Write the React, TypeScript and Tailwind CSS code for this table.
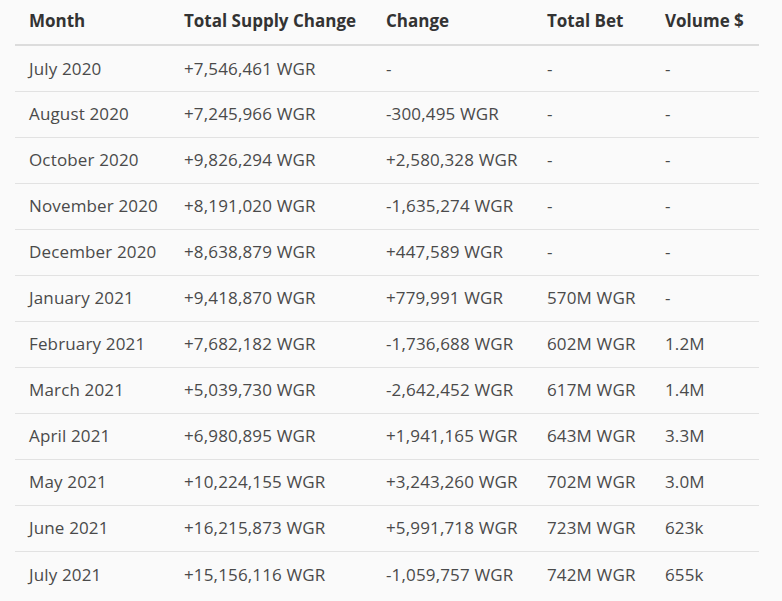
const rows: [string, string, string, string, string][] = [
  ['July 2020', '+7,546,461 WGR', '-', '-', '-'],
  ['August 2020', '+7,245,966 WGR', '-300,495 WGR', '-', '-'],
  ['October 2020', '+9,826,294 WGR', '+2,580,328 WGR', '-', '-'],
  ['November 2020', '+8,191,020 WGR', '-1,635,274 WGR', '-', '-'],
  ['December 2020', '+8,638,879 WGR', '+447,589 WGR', '-', '-'],
  ['January 2021', '+9,418,870 WGR', '+779,991 WGR', '570M WGR', '-'],
  ['February 2021', '+7,682,182 WGR', '-1,736,688 WGR', '602M WGR', '1.2M'],
  ['March 2021', '+5,039,730 WGR', '-2,642,452 WGR', '617M WGR', '1.4M'],
  ['April 2021', '+6,980,895 WGR', '+1,941,165 WGR', '643M WGR', '3.3M'],
  ['May 2021', '+10,224,155 WGR', '+3,243,260 WGR', '702M WGR', '3.0M'],
  ['June 2021', '+16,215,873 WGR', '+5,991,718 WGR', '723M WGR', '623k'],
  ['July 2021', '+15,156,116 WGR', '-1,059,757 WGR', '742M WGR', '655k'],
];

const headers = ['Month', 'Total Supply Change', 'Change', 'Total Bet', 'Volume $'];

export default function App() {
  return (
    <div
      className="min-h-[601px] w-full bg-[#fafafa] px-[15px] pb-4"
      style={{ fontFamily: '"Open Sans", "Noto Sans", sans-serif' }}
    >
      <table className="w-[744px] table-fixed border-collapse text-left text-[17px]">
        <colgroup>
          <col className="w-[155px]" />
          <col className="w-[202px]" />
          <col className="w-[161px]" />
          <col className="w-[118px]" />
          <col className="w-[108px]" />
        </colgroup>
        <thead>
          <tr className="h-[45px] border-b-2 border-[#dcdcdc]">
            {headers.map((h) => (
              <th key={h} className="px-[14px] pb-[3px] font-bold text-[#333]">
                {h}
              </th>
            ))}
          </tr>
        </thead>
        <tbody>
          {rows.map((r, i) => (
            <tr key={i} className="h-[46px] border-b border-[#e2e2e2] last:border-b-0">
              {r.map((c, j) => (
                <td
                  key={j}
                  className="whitespace-nowrap px-[14px] tracking-[0.15px] text-[#4a4a4a]"
                >
                  {c}
                </td>
              ))}
            </tr>
          ))}
        </tbody>
      </table>
    </div>
  );
}
